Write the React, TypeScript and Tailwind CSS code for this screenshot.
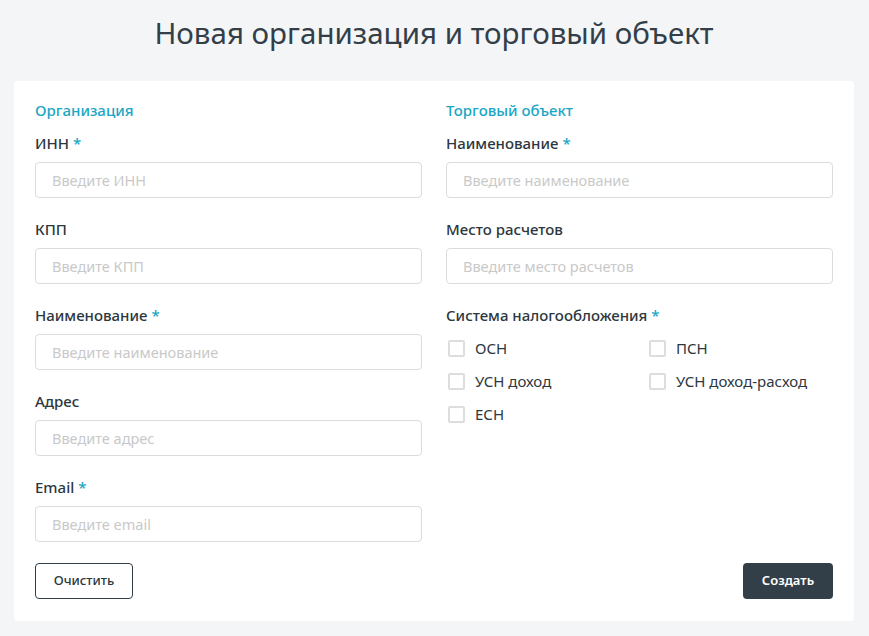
import React from "react";

const orgFields = [
  { label: "ИНН", required: true, placeholder: "Введите ИНН" },
  { label: "КПП", required: false, placeholder: "Введите КПП" },
  { label: "Наименование", required: true, placeholder: "Введите наименование" },
  { label: "Адрес", required: false, placeholder: "Введите адрес" },
  { label: "Email", required: true, placeholder: "Введите email" },
];

const shopFields = [
  { label: "Наименование", required: true, placeholder: "Введите наименование" },
  { label: "Место расчетов", required: false, placeholder: "Введите место расчетов" },
];

const taxes = ["ОСН", "ПСН", "УСН доход", "УСН доход-расход", "ЕСН"];

function Label({ text, required }: { text: string; required?: boolean }) {
  return (
    <div className="h-5 text-[15px] leading-5 font-medium text-[#2d3740]">
      {text}
      {required && <span className="text-[#1aa6c4]"> *</span>}
    </div>
  );
}

function Field({ label, required, placeholder }: { label: string; required: boolean; placeholder: string }) {
  return (
    <div className="flex flex-col">
      <Label text={label} required={required} />
      <input
        className="mt-[9px] h-9 w-full rounded border border-[#dcdcdc] px-4 text-[14.5px] text-[#2d3740] outline-none placeholder:text-[#c9c9c9]"
        placeholder={placeholder}
      />
    </div>
  );
}

export default function App() {
  return (
    <div className="min-h-screen bg-[#f4f5f7] pr-[15px] pl-[14px] pb-[15px]" style={{ fontFamily: '"Noto Sans", sans-serif' }}>
      <h1 className="h-[81px] pt-[11px] text-center text-[29.5px] leading-[44px] font-normal text-[#333f48]">
        Новая организация и торговый объект
      </h1>
      <div className="rounded bg-white px-[21px] pt-[19px] pb-[22px]">
        <div className="grid grid-cols-2 gap-x-6">
          <div className="flex flex-col">
            <div className="mb-[13px] h-5 text-[15px] leading-5 font-medium text-[#1aa6c4]">Организация</div>
            <div className="flex flex-col gap-[21px]">
              {orgFields.map((f) => (
                <Field key={f.label} {...f} />
              ))}
            </div>
          </div>
          <div className="flex flex-col">
            <div className="mb-[13px] h-5 text-[15px] leading-5 font-medium text-[#1aa6c4]">Торговый объект</div>
            <div className="flex flex-col gap-[21px]">
              {shopFields.map((f) => (
                <Field key={f.label} {...f} />
              ))}
              <div className="flex flex-col">
                <Label text="Система налогообложения" required />
                <div className="mt-[13px] grid grid-cols-[201px_1fr] gap-y-[13px] pl-[2px]">
                  {taxes.map((t) => (
                    <label key={t} className="flex h-5 items-center gap-[10px] text-[15px] text-[#2d3740]">
                      <span className="h-[17px] w-[17px] rounded-[2px] border-2 border-[#dddddd] bg-white" />
                      {t}
                    </label>
                  ))}
                </div>
              </div>
            </div>
          </div>
        </div>
        <div className="mt-[21px] flex justify-between">
          <button className="h-9 w-[98px] rounded border border-[#333f48] bg-white text-[13px] font-medium text-[#2d3740]">
            Очистить
          </button>
          <button className="h-9 w-[90px] rounded bg-[#333f48] text-[13px] font-semibold text-white">
            Создать
          </button>
        </div>
      </div>
    </div>
  );
}
